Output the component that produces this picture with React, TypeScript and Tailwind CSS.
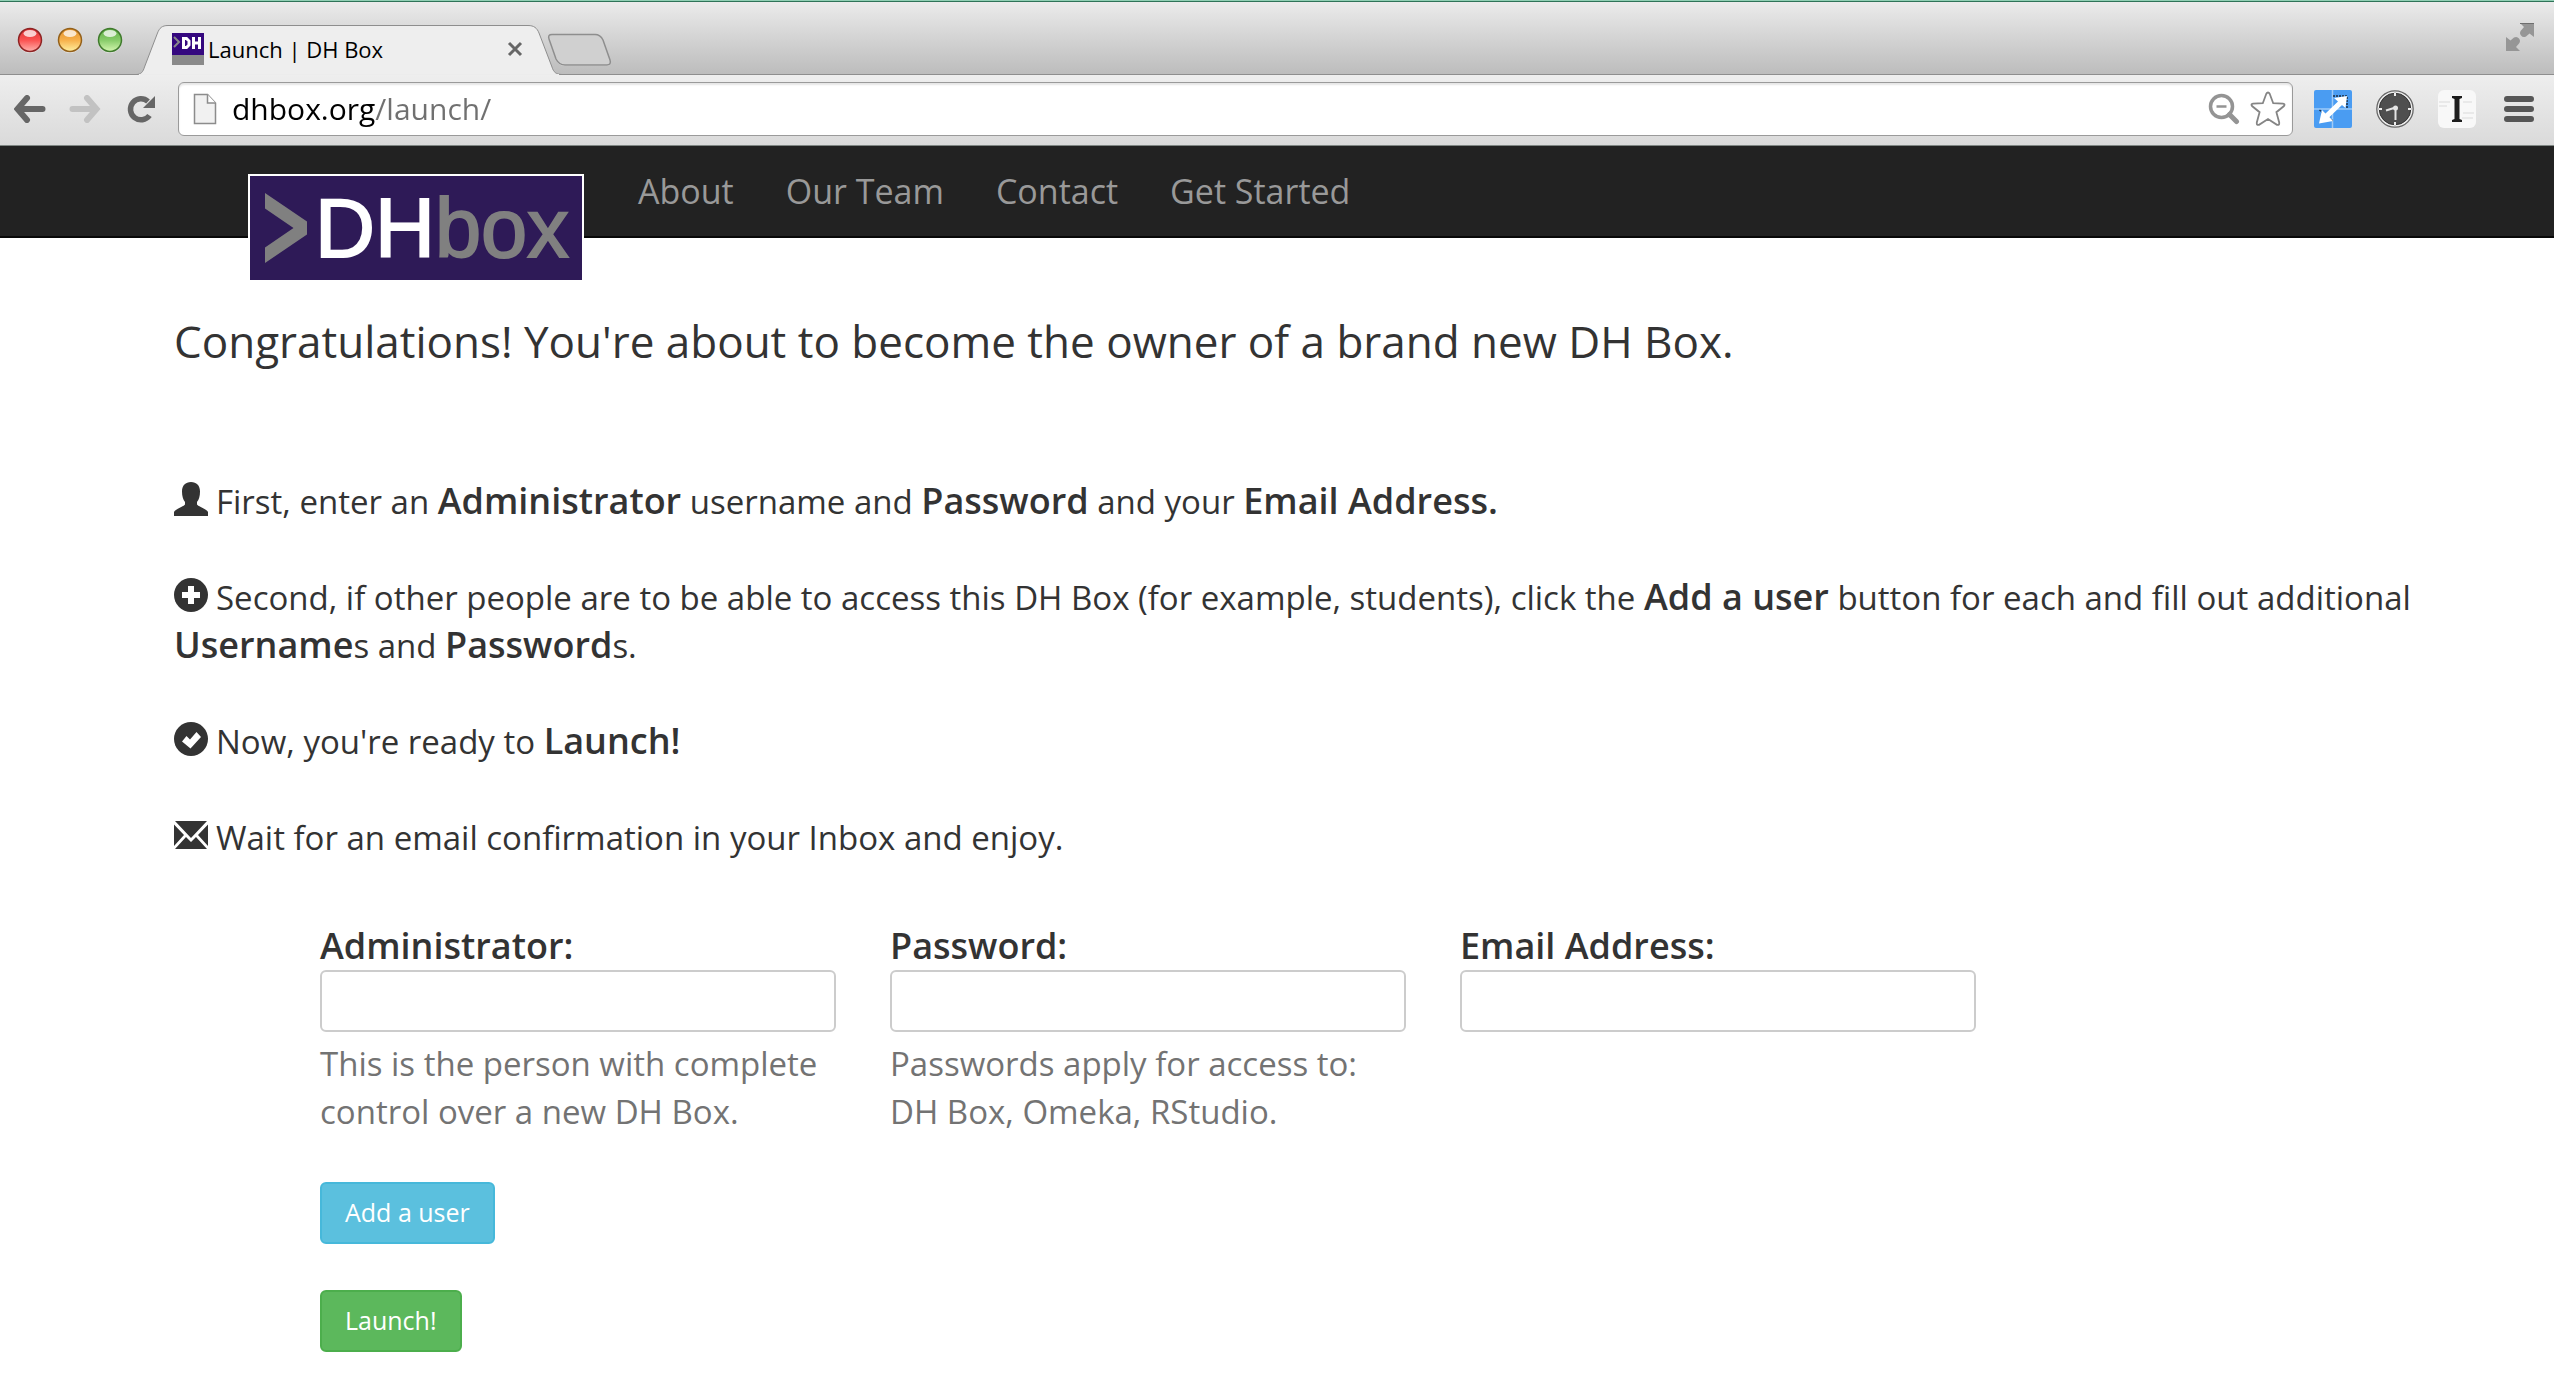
import type { ReactNode } from 'react';

function TrafficLight({ id, rim, dark, mid, light }: { id: string; rim: string; dark: string; mid: string; light: string }) {
  return (
    <svg className="size-[26px]" viewBox="0 0 26 26" aria-hidden="true">
      <defs>
        <linearGradient id={id} x1="0" y1="0" x2="0" y2="1">
          <stop offset="0" stopColor={dark} />
          <stop offset="0.5" stopColor={mid} />
          <stop offset="1" stopColor={light} />
        </linearGradient>
      </defs>
      <circle cx="13" cy="14" r="12" fill="#ffffff" opacity="0.5" />
      <circle cx="13" cy="13" r="11.5" fill={`url(#${id})`} stroke={rim} strokeWidth="1.5" />
      <ellipse cx="13" cy="6.5" rx="6.5" ry="3.5" fill="#ffffff" opacity="0.75" />
    </svg>
  );
}

function TabStrip() {
  return (
    <div className="flex h-[73px] items-end overflow-hidden bg-linear-to-b from-[#ebebeb] to-[#bcbcbc] shadow-[inset_0_-1px_0_#8e8e8e]">
      <div className="flex gap-[14px] self-start pt-[25px] pl-[17px]">
        <TrafficLight id="close" rim="#8d2323" dark="#d92f31" mid="#fb5150" light="#ffb3ae" />
        <TrafficLight id="minimise" rim="#93601a" dark="#e0902a" mid="#f7b04a" light="#fff0a0" />
        <TrafficLight id="maximise" rim="#3f7a2c" dark="#5fae45" mid="#86cb68" light="#d5f7b0" />
      </div>
      <div className="relative ml-[13px] h-[50px] w-[426px] shrink-0">
        <svg className="absolute inset-0 h-full w-full" viewBox="0 0 426 50" aria-hidden="true">
          <path
            d="M0 49.5 C5 49.5 7 47 8.500 42 L21.500 8 C23.500 3 26 .5 32 .5 H392 C398 .5 401 3 403 8 L416 42 C417.500 47 420 49.500 426 49.500"
            fill="#eeeeee"
            stroke="#8e8e8e"
          />
          <path d="M3 50 H423" stroke="#ececec" strokeWidth="2" />
        </svg>
        <div className="relative flex h-full items-center pr-[39px] pb-[2px] pl-[36px]">
          <svg className="mr-1 size-8 shrink-0" viewBox="0 0 32 32" aria-hidden="true">
            <path d="M0 0H32V22H0Z" fill="#35087f" />
            <path d="M0 22H32V32H0Z" fill="#8a8a8a" />
            <path d="M2 4L7 9L2 14" fill="none" stroke="#8a8a8a" strokeWidth="2" />
            <path d="M11.500 5.500V14.500H14.500L17 12V8L14.500 5.500ZM21.500 4V16M27.500 4V16M21.500 10H27.500" fill="none" stroke="#ffffff" strokeWidth="3" />
          </svg>
          <span className="flex-1 whitespace-nowrap text-[22px] leading-8 text-black">Launch | DH Box</span>
          <button type="button" aria-label="Close tab">
            <svg className="size-4" viewBox="0 0 16 16" aria-hidden="true">
              <path d="M2 2L14 14M14 2L2 14" stroke="#666666" strokeWidth="3" />
            </svg>
          </button>
        </div>
      </div>
      <button type="button" aria-label="New tab" className="-ml-4 self-start pt-[31px]">
        <svg className="h-[35px] w-[66px]" viewBox="0 0 66 35" aria-hidden="true">
          <path d="M6 2.500H49C53 2.500 55 4 57 8L64 28C65 31 64 33 61 33H19C15 33 12 31 10 27L3 7C2 4 3 2.500 6 2.500Z" fill="#ffffff" opacity="0.5" />
          <path d="M6 1.500H49C53 1.500 55 3 57 7L64 27C65 30 64 32 61 32H19C15 32 12 30 10 26L3 6C2 3 3 1.500 6 1.500Z" fill="#d0d0d0" stroke="#8e8e8e" strokeWidth="1.500" />
        </svg>
      </button>
      <button type="button" aria-label="Full screen" className="mr-5 ml-auto self-start pt-[21px]">
        <svg className="size-[28px]" viewBox="0 0 28 28" aria-hidden="true">
          <path d="M14 0H28V14L23.500 10.500L20 13.500Q17 15 15 12.500Q13 10 15 7.500L18 4Z" fill="#969696" />
          <path d="M14 .5H28" stroke="#6e6e6e" />
          <path d="M0 14L4.500 17.500L8 14.500Q11 13 13 15.500Q15 18 13 20.500L10 24L14 28H0Z" fill="#969696" />
        </svg>
      </button>
    </div>
  );
}

function Toolbar() {
  return (
    <div className="flex h-[71px] items-center border-b border-[#7f8683] bg-linear-to-b from-[#eeeeee] to-[#dadada] pr-5 pb-[2px] pl-[14px]">
      <button type="button" aria-label="Back">
        <svg className="h-[28px] w-[32px]" viewBox="0 0 32 28" aria-hidden="true">
          <path d="M13 3L3.500 14L13 25M4 14H28.500" fill="none" stroke="#666666" strokeWidth="6" strokeLinecap="round" strokeLinejoin="miter" />
        </svg>
      </button>
      <button type="button" aria-label="Forward" className="ml-[23px]">
        <svg className="h-[28px] w-[32px]" viewBox="0 0 32 28" aria-hidden="true">
          <path d="M18 3L27.500 14L18 25M27 14H3.500" fill="none" stroke="#c2c2c2" strokeWidth="6" strokeLinecap="round" />
        </svg>
      </button>
      <button type="button" aria-label="Reload" className="ml-[26px]">
        <svg className="size-[29px]" viewBox="0 0 29 29" aria-hidden="true">
          <path d="M22.500 20.500A10.500 10.500 0 1 1 21 6.500" fill="none" stroke="#666666" strokeWidth="5.500" />
          <path d="M28 1V13H16Z" fill="#666666" />
        </svg>
      </button>
      <div className="ml-[22px] flex h-[54px] flex-1 items-center rounded-[6px] border border-[#9a9a9a] bg-white pr-[6px] pl-[14px] shadow-[inset_0_2px_2px_#e6e6e6]">
        <svg className="h-[32px] w-[24px] shrink-0" viewBox="0 0 24 32" aria-hidden="true">
          <path d="M1.500 1.500H14.500L22.500 10V30.500H1.500Z" fill="#f1f1f1" stroke="#8c8c8c" strokeWidth="1.500" />
          <path d="M14.500 1.500V10H22.500" fill="#ffffff" stroke="#8c8c8c" strokeWidth="1.500" />
        </svg>
        <input
          type="text"
          aria-label="Address"
          defaultValue="dhbox.org/launch/"
          className="ml-[15px] h-10 min-w-0 flex-1 bg-[linear-gradient(to_right,#000000_143px,#707070_143px)] bg-clip-text text-[30px] leading-10 text-transparent outline-none"
        />
        <svg className="size-[32px] shrink-0" viewBox="0 0 32 32" aria-hidden="true">
          <circle cx="13.500" cy="13.500" r="11" fill="none" stroke="#949494" strokeWidth="3.500" />
          <path d="M8.500 13.500H18.500" stroke="#949494" strokeWidth="2.500" />
          <path d="M21.500 21.500L28.500 28.500" stroke="#949494" strokeWidth="5" strokeLinecap="round" />
        </svg>
        <svg className="ml-[10px] size-[36px] shrink-0" viewBox="0 0 36 36" aria-hidden="true">
          <path
            d="M18 1.500Q19 1.500 19.800 3L23.200 12.200L33 12.600Q35.500 13 34 15L26.400 21.200L29.200 31.500Q29.600 34.500 27 33.800L18 28L9 33.800Q6.400 34.500 6.800 31.500L9.600 21.200L2 15Q.5 13 3 12.600L12.800 12.200L16.200 3Q17 1.500 18 1.500Z"
            fill="#ffffff"
            stroke="#858585"
            strokeWidth="1.800"
          />
        </svg>
      </div>
      <button type="button" aria-label="Resize window" className="ml-[21px]">
        <svg className="size-[38px]" viewBox="0 0 38 38" aria-hidden="true">
          <rect width="38" height="38" rx="2" fill="#4a9cf2" />
          <path d="M18.500 0V38M0 19H38" stroke="#9fcaf8" strokeWidth="1.500" />
          <path d="M19 6H33V19M5.500 20L19 31" fill="none" stroke="#1b2c40" strokeWidth="1.500" strokeDasharray="2 1" />
          <path d="M33 6L31.500 18L28 15L15.500 27L19 31L5 33.500L8 20L11.500 23.500L24 11.500L20 8Z" fill="#ffffff" />
        </svg>
      </button>
      <button type="button" aria-label="Clock" className="ml-6">
        <svg className="size-[38px]" viewBox="0 0 38 38" aria-hidden="true">
          <circle cx="19" cy="19" r="18.200" fill="#eeeeee" stroke="#666666" strokeWidth="1.300" />
          <circle cx="19" cy="19" r="15.800" fill="#4f4f4f" stroke="#333333" />
          <path d="M19 3V6M19 32V35M3 19H6M32 19H35" stroke="#eeeeee" strokeWidth="2" />
          <path d="M19.500 17.500L10 20.500M19.500 18V30" stroke="#e4e4e4" strokeWidth="2" />
          <circle cx="19.500" cy="18" r="2.500" fill="#e4e4e4" />
        </svg>
      </button>
      <button type="button" aria-label="Save for later" className="ml-6">
        <svg className="size-[38px]" viewBox="0 0 38 38" aria-hidden="true">
          <rect width="38" height="38" rx="6" fill="#f8f8f8" />
          <path d="M1 12H12M1 16H9M25 12H34M25 23H36M24 28H35" stroke="#e9e9e9" strokeWidth="2" />
          <path d="M14 6H24V8L21.500 9V29L24 30V32H14V30L16.500 29V9L14 8Z" fill="#1d1d1d" />
        </svg>
      </button>
      <button type="button" aria-label="Menu" className="ml-7">
        <svg className="h-[26px] w-[30px]" viewBox="0 0 30 26" aria-hidden="true">
          <path d="M3 3H27M3 13H27M3 23H27" stroke="#565656" strokeWidth="6" strokeLinecap="round" />
        </svg>
      </button>
    </div>
  );
}

function SiteNav() {
  const links = ['About', 'Our Team', 'Contact', 'Get Started'];
  return (
    <nav className="flex h-[92px] items-start border-b-2 border-[#080808] bg-[#222222] pl-[248px]">
      <a href="#home" aria-label="DH Box home" className="relative mt-7 block shrink-0">
        <svg className="h-[108px] w-[336px]" viewBox="0 0 336 108">
          <rect width="336" height="108" fill="#ffffff" />
          <rect x="2" y="2" width="332" height="104" fill="#2e1a57" />
          <path d="M17 19L59 47.500V60.500L17 89V73.500L45.500 54L17 34.500Z" fill="#808080" />
          <text x="67" y="83" fontSize="83" strokeWidth="2" className="font-['Liberation_Sans',Arial,sans-serif]">
            <tspan fill="#ffffff" stroke="#ffffff">DH</tspan>
            <tspan fill="#808080" stroke="#808080">box</tspan>
          </text>
        </svg>
      </a>
      <ul className="ml-[54px] flex gap-[52px] pt-[21px]">
        {links.map((label) => (
          <li key={label}>
            <a href="#nav" className="text-[34px] leading-[48px] whitespace-nowrap text-[#999999]">
              {label}
            </a>
          </li>
        ))}
      </ul>
    </nav>
  );
}

function Glyph({ children }: { children: ReactNode }) {
  return (
    <svg className="mr-2 inline-block size-[34px] align-[-2px]" viewBox="0 0 34 34" fill="#333333" aria-hidden="true">
      {children}
    </svg>
  );
}

function Strong({ children }: { children: ReactNode }) {
  return <strong className="text-[36px] leading-10 font-semibold">{children}</strong>;
}

function Instructions() {
  return (
    <div className="mt-[113px] flex flex-col gap-12 text-[33px] leading-[48px]">
      <p>
        <Glyph>
          <path d="M17 0C22.500 0 26 3.500 26 9.500C26 14 25 17.500 23 20V22.500C24 24.500 33 27 34 30V34H0V30C1 27 10 24.500 11 22.500V20C9 17.500 8 14 8 9.500C8 3.500 11.500 0 17 0Z" />
        </Glyph>
        First, enter an <Strong>Administrator</Strong> username and <Strong>Password</Strong> and your <Strong>Email Address.</Strong>
      </p>
      <p>
        <Glyph>
          <circle cx="17" cy="17" r="17" />
          <path d="M14 8H20V14H26V20H20V26H14V20H8V14H14Z" fill="#ffffff" />
        </Glyph>
        Second, if other people are to be able to access this DH Box (for example, students), click the <Strong>Add a user</Strong> button
        for each and fill out additional <Strong>Username</Strong>s and <Strong>Password</Strong>s.
      </p>
      <p>
        <Glyph>
          <circle cx="17" cy="17" r="17" />
          <path d="M8 19.500L12.500 14L16 17.500L22.500 10L27 15L16.500 26.500Z" fill="#ffffff" />
        </Glyph>
        Now, you're ready to <Strong>Launch!</Strong>
      </p>
      <p>
        <Glyph>
          <path d="M1 3H33L17 20ZM0 6.500L10 17L0 28ZM34 6.500L24 17L34 28ZM1 31L12 19L17 24L22 19L33 31Z" />
        </Glyph>
        Wait for an email confirmation in your Inbox and enjoy.
      </p>
    </div>
  );
}

function Field({ id, type, label, children }: { id: string; type: string; label: string; children?: ReactNode }) {
  return (
    <div>
      <label htmlFor={id} className="block text-[36px] leading-[48px] font-semibold">
        {label}
      </label>
      <input id={id} type={type} className="block h-[62px] w-full rounded-[6px] border-2 border-[#cccccc] bg-white px-4 text-[33px]" />
      {children && <p className="mt-2 text-[33px] leading-[48px] text-[#737373]">{children}</p>}
    </div>
  );
}

export default function App() {
  return (
    <div className="min-h-screen bg-white font-['Open_Sans','Noto_Sans',sans-serif] text-[#333333]">
      <header>
        <div className="h-[2px] border-b border-[#2f7358] bg-[#90cfb4]" />
        <TabStrip />
        <Toolbar />
      </header>
      <SiteNav />
      <main className="pt-[79px] pr-[110px] pb-6 pl-[174px]">
        <h1 className="text-[44px] leading-[48px]">Congratulations! You're about to become the owner of a brand new DH Box.</h1>
        <Instructions />
        <form className="mt-[60px] ml-[146px]" onSubmit={(event) => event.preventDefault()}>
          <div className="grid max-w-[1656px] grid-cols-3 gap-[54px]">
            <Field id="administrator" type="text" label="Administrator:">
              This is the person with complete control over a new DH Box.
            </Field>
            <Field id="password" type="password" label="Password:">
              Passwords apply for access to:
              <br />
              DH Box, Omeka, RStudio.
            </Field>
            <Field id="email" type="email" label="Email Address:" />
          </div>
          <div className="mt-[46px] flex flex-col items-start gap-[46px]">
            <button type="button" className="h-[62px] rounded-[6px] border-2 border-[#46b8da] bg-[#5bc0de] px-[23px] text-[25px] text-white">
              Add a user
            </button>
            <button type="submit" className="h-[62px] rounded-[6px] border-2 border-[#4cae4c] bg-[#5cb85c] px-[23px] text-[25px] text-white">
              Launch!
            </button>
          </div>
        </form>
      </main>
    </div>
  );
}
